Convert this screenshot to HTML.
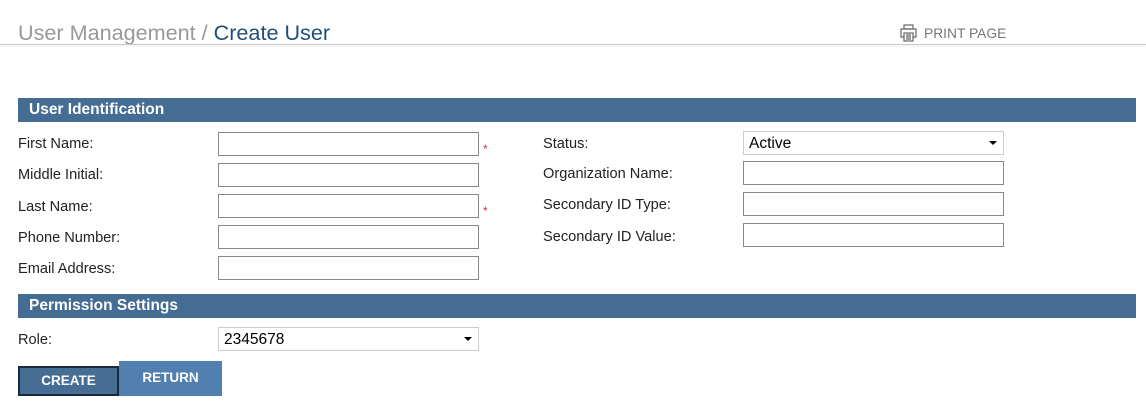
<!DOCTYPE html>
<html><head><style>
body{margin:0;width:1146px;height:409px;background:#fff;font-family:"Liberation Sans",Arial,sans-serif;position:relative;overflow:hidden}
.a{position:absolute}
.t{font-size:21.6px;top:20px;left:18px;color:#999}
.t span{color:#1f4e79}
.hl{top:44px;left:0;width:1146px;height:1px;background:#ccc;box-shadow:0 1px 2px #ddd}
.bar{left:18px;width:1118px;height:24px;background:#456d94;color:#fff;font-weight:bold;font-size:15.5px;line-height:24px;padding-left:11px;box-sizing:border-box}
.l{font-size:14.6px;color:#222;margin-top:1px}
.i{border:1px solid #888;height:24px;box-sizing:border-box;background:#fff}
.s{border:1px solid #ccc;height:24px;box-sizing:border-box;background:#fff;font-size:15.5px;line-height:24px;padding-left:5px;color:#000}
.s:after{content:"";position:absolute;right:6px;top:9px;border-left:4px solid transparent;border-right:4px solid transparent;border-top:4px solid #000}
.r{color:#c33;font-size:12px}
.b{color:#fff;font-weight:bold;font-size:13.5px;text-align:center;box-sizing:border-box}
</style></head><body>
<div class="a t">User Management / <span>Create User</span></div>
<div class="a hl"></div>
<svg class="a" style="left:900px;top:24px" width="18" height="18" viewBox="0 0 18 18" fill="none" stroke="#666" stroke-width="1.2"><rect x="4" y="1" width="9" height="4"/><rect x="1" y="5" width="15" height="8"/><rect x="4" y="9" width="9" height="8" fill="#fff"/><path d="M6 11h5M6 13h5M6 15h5"/></svg>
<div class="a" style="left:924px;top:26px;font-size:13.8px;color:#777">PRINT PAGE</div>

<div class="a bar" style="top:98px">User Identification</div>
<div class="a l" style="left:18px;top:135px">First Name:</div>
<div class="a l" style="left:18px;top:166px">Middle Initial:</div>
<div class="a l" style="left:18px;top:198px">Last Name:</div>
<div class="a l" style="left:18px;top:229px">Phone Number:</div>
<div class="a l" style="left:18px;top:260px">Email Address:</div>
<div class="a i" style="left:218px;top:132px;width:261px"></div>
<div class="a i" style="left:218px;top:163px;width:261px"></div>
<div class="a i" style="left:218px;top:194px;width:261px"></div>
<div class="a i" style="left:218px;top:225px;width:261px"></div>
<div class="a i" style="left:218px;top:256px;width:261px"></div>
<div class="a r" style="left:483px;top:142px">*</div>
<div class="a r" style="left:483px;top:204px">*</div>
<div class="a l" style="left:543px;top:135px">Status:</div>
<div class="a l" style="left:543px;top:165px">Organization Name:</div>
<div class="a l" style="left:543px;top:196px">Secondary ID Type:</div>
<div class="a l" style="left:543px;top:228px">Secondary ID Value:</div>
<div class="a s" style="left:743px;top:131px;width:261px">Active</div>
<div class="a i" style="left:743px;top:161px;width:261px"></div>
<div class="a i" style="left:743px;top:192px;width:261px"></div>
<div class="a i" style="left:743px;top:223px;width:261px"></div>

<div class="a bar" style="top:294px">Permission Settings</div>
<div class="a l" style="left:18px;top:331px">Role:</div>
<div class="a s" style="left:218px;top:327px;width:261px">2345678</div>
<div class="a b" style="left:18px;top:366px;width:101px;height:30px;background:#466e95;border:2px solid #1a2a3a;line-height:26px">CREATE</div>
<div class="a b" style="left:119px;top:361px;width:103px;height:35px;background:#5180b0;line-height:34px">RETURN</div>
</body></html>
